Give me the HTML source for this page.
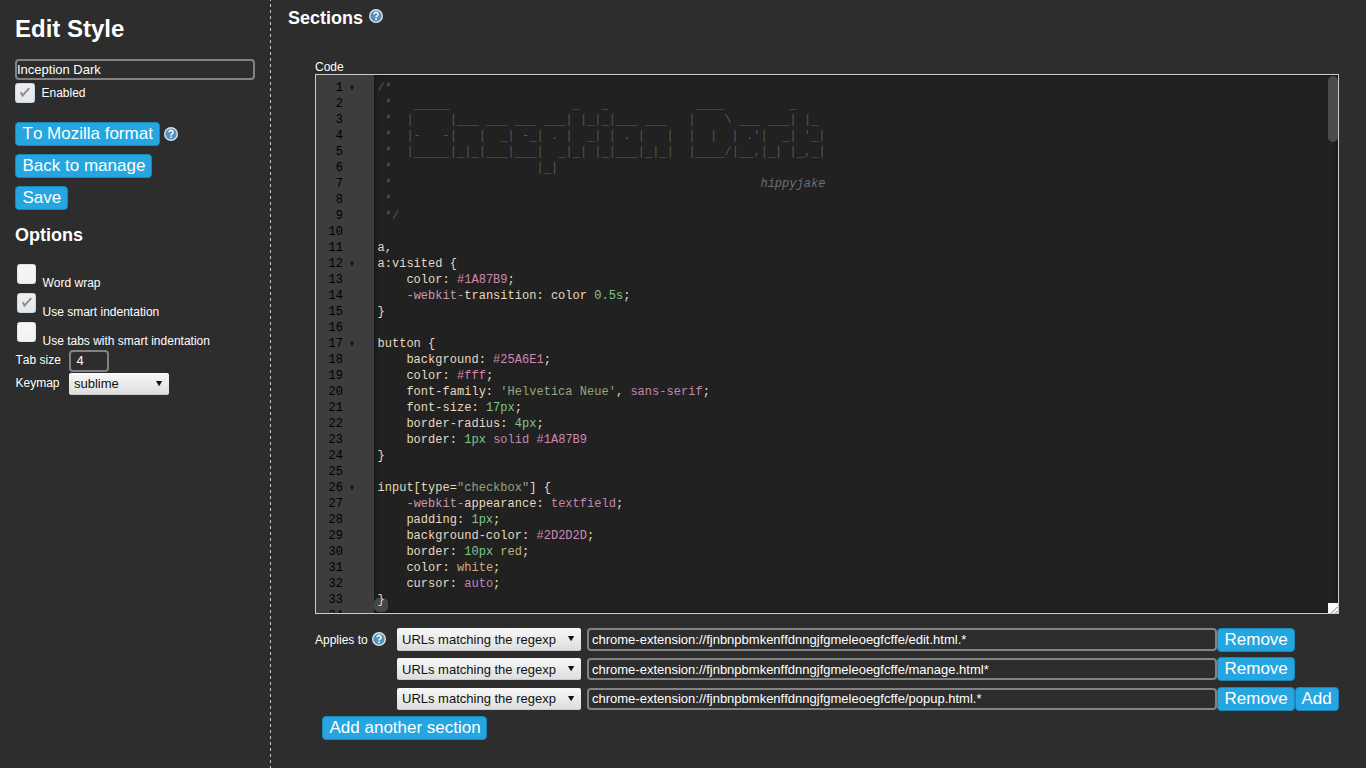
<!DOCTYPE html>
<html><head><meta charset="utf-8">
<style>
*{box-sizing:border-box}
html,body{font-kerning:none;margin:0;padding:0;width:1366px;height:768px;overflow:hidden;background:#2d2d2d;font-family:"Liberation Sans",sans-serif;color:#fff}
.a{position:absolute;white-space:pre}
.sidebar{position:absolute;left:270px;top:0;width:1px;height:768px;background:repeating-linear-gradient(to bottom,#cac6c2 0,#cac6c2 3px,transparent 3px,transparent 6px);background-position:0 4px}
.btn{position:absolute;height:24px;background:#25A6E1;border:1px solid #1A87B9;border-radius:4px;color:#fff;font-size:17px;line-height:22px;padding:0 6.5px;white-space:pre}
.cb{position:absolute;width:20px;height:20px;border-radius:2.5px;background:linear-gradient(#f7f7f7,#f1f1f1);border:1px solid #e4e4e4}
.cb.on{background:linear-gradient(#eeeff1,#e5e6e9);border-color:#cbd9e6}

.txt{position:absolute;border:2px solid #838383;border-radius:4px;background:transparent;color:#fff;font-size:13px;white-space:pre;overflow:hidden}
.sel{position:absolute;border-radius:2px;background:linear-gradient(#f7f7f7,#dedede);border-top:1px solid #fafafa;border-bottom:1px solid #c9c9c9;color:#111;font-size:13px;white-space:pre}
.arr{position:absolute;width:7px;height:6px}
.help{position:absolute;width:14px;height:14px}
.editor{position:absolute;left:315px;top:74px;width:1024px;height:540px;border:1px solid #cccccc;background:#212121;overflow:hidden}
.gutter{position:absolute;left:0;top:0;width:58px;height:538px;background:#3d3d3d}
.shadow{position:absolute;left:58px;top:0;width:964px;height:538px;box-shadow:inset 0 0 5px rgba(0,0,0,.55)}
.ln{position:absolute;left:0;width:27px;text-align:right;font-family:"Liberation Mono",monospace;font-size:12px;line-height:16px;color:#000;white-space:pre}
.fold{position:absolute;left:33.5px;width:0;height:0;border-left:2.75px solid transparent;border-right:2.75px solid transparent;border-top:5px solid #111}
.code{position:absolute;z-index:2;left:61.5px;top:4.5px;font-family:"Liberation Mono",monospace;font-size:12px;line-height:16px;letter-spacing:0.0234px;color:#e6dabf;white-space:pre}
.c{color:#565656}
.u{position:relative;top:1.5px}
.hj{color:#6d6f72;font-style:italic}
.n{color:#80c88c}
.h{color:#d088b2}
.s{color:#97a67b}
.k{color:#c487ad}
.v{color:#c9af7e}
.p{color:#c29aae}
</style></head><body>
<div class="sidebar"></div>

<!-- sidebar -->
<div class="a" style="left:15px;top:15px;font-size:24px;font-weight:bold;line-height:28px">Edit Style</div>
<div class="txt" style="left:15px;top:59px;width:240px;height:21px;line-height:17px;padding-left:0">Inception Dark</div>
<div class="cb on" style="left:15px;top:83px"><svg width="20" height="20" style="position:absolute;left:-1px;top:-1px"><path d="M5.8 9.3 L7.5 12.6 L14.2 5.2" fill="none" stroke="#8c8c8c" stroke-width="1.9"/></svg></div>
<div class="a" style="left:41.5px;top:86px;font-size:12px;line-height:14px">Enabled</div>

<div class="btn" style="left:15px;top:122px;width:145px">To Mozilla format</div>
<svg class="help" style="left:164px;top:127px" viewBox="0 0 14 14"><circle cx="7" cy="7" r="7" fill="#d3e4f1"/><circle cx="7" cy="7" r="5.6" fill="#5892ba"/><path d="M5.1 5.3 A1.95 1.95 0 1 1 8.2 6.9 C7.4 7.4 7 7.7 7 8.6" fill="none" stroke="#fff" stroke-width="1.55"/><rect x="6.2" y="9.5" width="1.6" height="1.5" fill="#fff"/></svg>
<div class="btn" style="left:15px;top:154px;width:137px">Back to manage</div>
<div class="btn" style="left:15px;top:186px;width:53px">Save</div>

<div class="a" style="left:15px;top:225px;font-size:18px;font-weight:bold;line-height:21px">Options</div>
<div class="cb" style="left:17px;width:19px;top:264px"></div>
<div class="a" style="left:42.5px;top:276px;font-size:12px;line-height:14px">Word wrap</div>
<div class="cb on" style="left:17px;width:19px;top:293px"><svg width="20" height="20" style="position:absolute;left:-1px;top:-1px"><path d="M5.8 9.3 L7.5 12.6 L14.2 5.2" fill="none" stroke="#8c8c8c" stroke-width="1.9"/></svg></div>
<div class="a" style="left:42.5px;top:305px;font-size:12px;line-height:14px">Use smart indentation</div>
<div class="cb" style="left:17px;width:19px;top:322px"></div>
<div class="a" style="left:42.5px;top:334px;font-size:12px;line-height:14px">Use tabs with smart indentation</div>
<div class="a" style="left:15.5px;top:353px;font-size:12px;line-height:14px">Tab size</div>
<div class="txt" style="left:69px;top:350px;width:40px;height:22px;line-height:18px;padding-left:5.5px">4</div>
<div class="a" style="left:15.5px;top:376px;font-size:12px;line-height:14px">Keymap</div>
<div class="sel" style="left:69px;top:373px;width:100px;height:22px;line-height:20px;padding-left:5px">sublime</div>
<svg class="arr" style="left:156px;top:381px" viewBox="0 0 7 6"><path d="M0 0H6.2L3.1 5.3Z" fill="#111"/></svg>

<!-- main -->
<div class="a" style="left:288px;top:8px;font-size:18px;font-weight:bold;line-height:21px">Sections</div>
<svg class="help" style="left:369px;top:9px" viewBox="0 0 14 14"><circle cx="7" cy="7" r="7" fill="#d3e4f1"/><circle cx="7" cy="7" r="5.6" fill="#5892ba"/><path d="M5.1 5.3 A1.95 1.95 0 1 1 8.2 6.9 C7.4 7.4 7 7.7 7 8.6" fill="none" stroke="#fff" stroke-width="1.55"/><rect x="6.2" y="9.5" width="1.6" height="1.5" fill="#fff"/></svg>
<div class="a" style="left:315px;top:59.5px;font-size:12px;line-height:14px">Code</div>

<div class="editor">
  <div class="gutter"></div>
  <div class="shadow"></div>
  <div id="lns"><div class="ln" style="top:5px">1</div><div class="ln" style="top:21px">2</div><div class="ln" style="top:37px">3</div><div class="ln" style="top:53px">4</div><div class="ln" style="top:69px">5</div><div class="ln" style="top:85px">6</div><div class="ln" style="top:101px">7</div><div class="ln" style="top:117px">8</div><div class="ln" style="top:133px">9</div><div class="ln" style="top:149px">10</div><div class="ln" style="top:165px">11</div><div class="ln" style="top:181px">12</div><div class="ln" style="top:197px">13</div><div class="ln" style="top:213px">14</div><div class="ln" style="top:229px">15</div><div class="ln" style="top:245px">16</div><div class="ln" style="top:261px">17</div><div class="ln" style="top:277px">18</div><div class="ln" style="top:293px">19</div><div class="ln" style="top:309px">20</div><div class="ln" style="top:325px">21</div><div class="ln" style="top:341px">22</div><div class="ln" style="top:357px">23</div><div class="ln" style="top:373px">24</div><div class="ln" style="top:389px">25</div><div class="ln" style="top:405px">26</div><div class="ln" style="top:421px">27</div><div class="ln" style="top:437px">28</div><div class="ln" style="top:453px">29</div><div class="ln" style="top:469px">30</div><div class="ln" style="top:485px">31</div><div class="ln" style="top:501px">32</div><div class="ln" style="top:517px">33</div><div class="ln" style="top:533px">34</div><div class="fold" style="top:11px"></div><div class="fold" style="top:187px"></div><div class="fold" style="top:267px"></div><div class="fold" style="top:411px"></div></div>
  <div class="code" id="code"><span class="c">/*</span>
<span class="c"> *   <span class="u">_____</span>                 <span class="u">_</span>   <span class="u">_</span>            <span class="u">____</span>         <span class="u">_</span></span>
<span class="c"> *  |     |<span class="u">___</span> <span class="u">___</span> <span class="u">___</span> <span class="u">___</span>| |<span class="u">_</span>|<span class="u">_</span>|<span class="u">___</span> <span class="u">___</span>   |    \ <span class="u">___</span> <span class="u">___</span>| |<span class="u">_</span></span>
<span class="c"> *  |-   -|   |  <span class="u">_</span>| -<span class="u">_</span>| . |  <span class="u">_</span>| | . |   |  |  |  | .'|  <span class="u">_</span>| '<span class="u">_</span>|</span>
<span class="c"> *  |<span class="u">_____</span>|<span class="u">_</span>|<span class="u">_</span>|<span class="u">___</span>|<span class="u">___</span>|  <span class="u">_</span>|<span class="u">_</span>| |<span class="u">_</span>|<span class="u">___</span>|<span class="u">_</span>|<span class="u">_</span>|  |<span class="u">____</span>/|<span class="u">__</span>,|<span class="u">_</span>| |<span class="u">_</span>,<span class="u">_</span>|</span>
<span class="c"> *                    |<span class="u">_</span>|</span>
<span class="c"> *                                                   </span><span class="hj">hippyjake</span>
<span class="c"> *</span>
<span class="c"> */</span>

a,
a:visited {
    color: <span class="h">#1A87B9</span>;
    <span class="p">-webkit-</span>transition: color <span class="n">0.5s</span>;
}

button {
    background: <span class="h">#25A6E1</span>;
    color: <span class="h">#fff</span>;
    font-family: <span class="s">'Helvetica Neue'</span>, <span class="k">sans-serif</span>;
    font-size: <span class="n">17px</span>;
    border-radius: <span class="n">4px</span>;
    border: <span class="n">1px</span> <span class="k">solid</span> <span class="h">#1A87B9</span>
}

input[type=<span class="s">"checkbox"</span>] {
    <span class="p">-webkit-</span>appearance: <span class="k">textfield</span>;
    padding: <span class="n">1px</span>;
    background-color: <span class="h">#2D2D2D</span>;
    border: <span class="n">10px</span> <span class="v">red</span>;
    color: <span class="v">white</span>;
    cursor: <span class="k">auto</span>;
}
</div>
<div id="extras">
  <div style="position:absolute;left:1012px;top:1px;width:10px;height:66px;border-radius:5px;background:#4b4b4b"></div>
  <div style="position:absolute;left:58px;top:523px;width:14px;height:14px;border-radius:5px;background:#474747"></div>
  <div style="position:absolute;left:1012px;top:528px;width:10px;height:10px;background:#fafafa"></div>
  <svg style="position:absolute;left:1012px;top:528px;z-index:3" width="10" height="10"><path d="M3.5 10 L10 3.5 M7.5 10 L10 7.5" stroke="#7a7a7a" stroke-width="1" fill="none"/></svg>
</div>
</div>

<div class="a" style="left:315px;top:633px;font-size:12px;line-height:14px">Applies to</div>
<svg class="help" style="left:372px;top:632px" viewBox="0 0 14 14"><circle cx="7" cy="7" r="7" fill="#d3e4f1"/><circle cx="7" cy="7" r="5.6" fill="#5892ba"/><path d="M5.1 5.3 A1.95 1.95 0 1 1 8.2 6.9 C7.4 7.4 7 7.7 7 8.6" fill="none" stroke="#fff" stroke-width="1.55"/><rect x="6.2" y="9.5" width="1.6" height="1.5" fill="#fff"/></svg>

<div class="sel" style="left:397px;top:628px;width:184px;height:23px;line-height:21px;padding-left:5px">URLs matching the regexp</div>
<svg class="arr" style="left:568px;top:636px" viewBox="0 0 7 6"><path d="M0 0H6.2L3.1 5.3Z" fill="#111"/></svg>
<div class="txt" style="left:587px;top:628px;width:630px;height:23px;line-height:19px;padding-left:3px">chrome-extension://fjnbnpbmkenffdnngjfgmeleoegfcffe/edit.html.*</div>
<div class="btn" style="left:1217px;top:628px;width:78px">Remove</div>
<div class="sel" style="left:397px;top:658px;width:184px;height:22px;line-height:21px;padding-left:5px">URLs matching the regexp</div>
<svg class="arr" style="left:568px;top:666px" viewBox="0 0 7 6"><path d="M0 0H6.2L3.1 5.3Z" fill="#111"/></svg>
<div class="txt" style="left:587px;top:658px;width:630px;height:22px;line-height:19px;padding-left:3px">chrome-extension://fjnbnpbmkenffdnngjfgmeleoegfcffe/manage.html*</div>
<div class="btn" style="left:1217px;top:657px;width:78px">Remove</div>
<div class="sel" style="left:397px;top:688px;width:184px;height:22px;line-height:19px;padding-left:5px">URLs matching the regexp</div>
<svg class="arr" style="left:568px;top:696px" viewBox="0 0 7 6"><path d="M0 0H6.2L3.1 5.3Z" fill="#111"/></svg>
<div class="txt" style="left:587px;top:688px;width:630px;height:22px;line-height:17px;padding-left:3px">chrome-extension://fjnbnpbmkenffdnngjfgmeleoegfcffe/popup.html.*</div>
<div class="btn" style="left:1217px;top:687px;width:78px">Remove</div>
<div class="btn" style="left:1295px;top:687px;width:44px;padding-left:5.5px">Add</div>
<div class="btn" style="left:322px;top:716px;width:165px">Add another section</div>
</body></html>
